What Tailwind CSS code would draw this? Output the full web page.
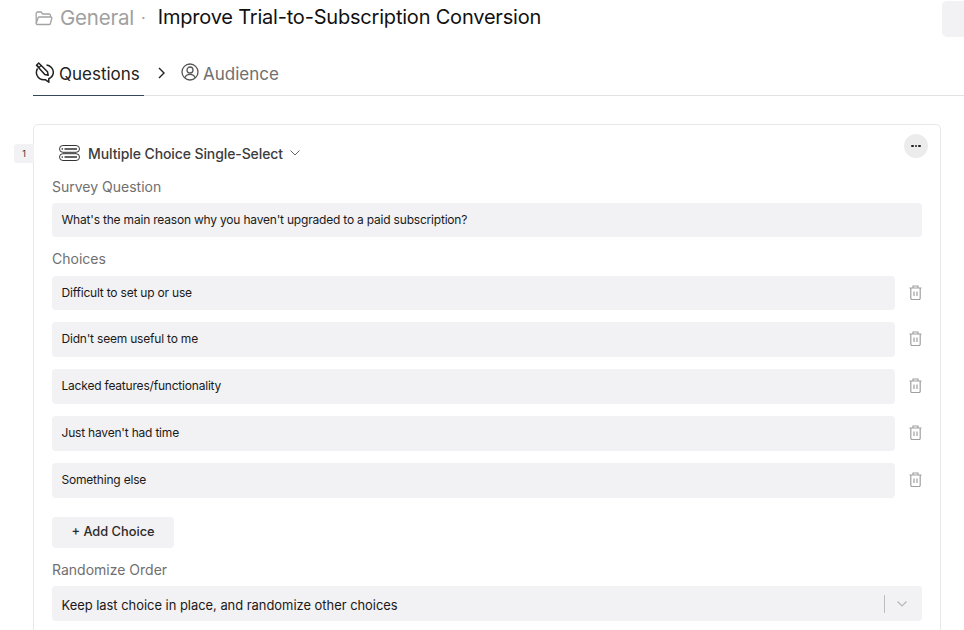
<!DOCTYPE html>
<html>
<head>
<meta charset="utf-8">
<script src="https://cdn.jsdelivr.net/npm/@tailwindcss/browser@4"></script>
</head>
<body class="bg-white overflow-hidden font-['Inter',sans-serif]">
<div class="h-[630px] w-[964px] overflow-hidden relative">
  <!-- title -->
  <div class="h-[36px] flex items-center pl-[35px] relative">
    <svg class="w-[18px] h-[15px] text-[#a3a3a3]" viewBox="0 0 18 15" fill="none" stroke="currentColor" stroke-width="1.300"><path d="M1.200 12.500V2.500A1.500 1.500 0 0 1 2.700 1h3.400l1.600 2h6.300a1.500 1.500 0 0 1 1.500 1.500V6"/><path d="M1.200 12.500 3 7a1.500 1.500 0 0 1 1.400-1h11.400a1 1 0 0 1 1 1.300l-1.400 5.200a1.300 1.300 0 0 1-1.300 1H2.300a1.100 1.100 0 0 1-1.100-1z"/></svg>
    <span class="ml-[7px] text-[20.500px] leading-none text-[#a0a0a0] tracking-[-0.2px]">General</span>
    <span class="ml-[7px] text-[#a0a0a0] text-[16px] leading-none">·</span>
    <span class="ml-[12px] text-[20px] leading-none text-[#111] tracking-[-0.2px] -translate-y-[1px]">Improve Trial-to-Subscription Conversion</span>
    <div class="absolute left-[942px] top-[1px] w-[30px] h-[36px] rounded-[5px] bg-[#f2f1f3]"></div>
  </div>
  <!-- tabs -->
  <div class="mt-[14px] ml-[33px] h-[46px] flex border-b border-[#e2e2e2]">
    <div class="w-[111px] h-[46px] border-b border-[#33475b] flex items-center pl-[2px]">
      <svg class="w-[19px] h-[21px] text-[#222]" viewBox="0 0 19 21" fill="none" stroke="currentColor" stroke-width="1.500"><path d="M2.600 6.500C1.300 8.500 1 11 2 13.300c1.300 2.900 4.300 4.700 7.500 4.500h1l3.300 2.300v-3.300c2.800-1.300 4.700-4 4.500-7-.1-1.700-.8-3.200-1.900-4.400-1.300-1.400-3-2.300-4.900-2.500"/><path d="M1.500 3.200 3.700 1l8.800 8.800.7 3.400-3.400-.7z" stroke-linejoin="round"/><path d="M1.800 3.200 4.200 5.500 6 3.500" stroke-width="1.200"/></svg>
      <span class="ml-[5px] text-[17px] text-[#222] translate-y-[2px]">Questions</span>
    </div>
    <div class="flex items-center">
      <svg class="ml-[13px] w-[9px] h-[12px] text-[#222]" viewBox="0 0 9 12" fill="none" stroke="currentColor" stroke-width="1.400"><path d="M2 1l5 5-5 5"/></svg>
      <svg class="ml-[15px] w-[18px] h-[18px] text-[#555] -translate-y-[1px]" viewBox="0 0 18 18" fill="none" stroke="currentColor" stroke-width="1.300"><circle cx="9" cy="9" r="8"/><circle cx="9" cy="7" r="3"/><path d="M3.800 15c.8-2.500 2.800-3.700 5.200-3.700s4.400 1.200 5.200 3.700"/></svg>
      <span class="ml-[4px] text-[17px] text-[#6f6f6f] translate-y-[2px]">Audience</span>
    </div>
  </div>
  <!-- card -->
  <div class="relative mt-[28px] ml-[33px] w-[908px] border border-[#e8e8e8] rounded-[5px] pl-[18px] pr-[18px] h-[520px]">
    <div class="absolute left-[-20px] top-[19px] w-[20px] h-[19px] bg-[#f2f1f3] rounded-l-[3px] flex items-center justify-center text-[9px] text-[#333]">1</div>
    <div class="absolute right-[12px] top-[9px] w-[24px] h-[24px] rounded-full bg-[#ececec] flex items-center justify-center gap-[1px]">
      <i class="block w-[2.500px] h-[2.500px] rounded-full bg-[#222]"></i><i class="block w-[2.500px] h-[2.500px] rounded-full bg-[#222]"></i><i class="block w-[2.500px] h-[2.500px] rounded-full bg-[#222]"></i>
    </div>
    <div class="h-[28px] mt-[14px] flex items-center pl-[7px]">
      <svg class="w-[21px] h-[16px] text-[#333]" viewBox="0 0 21 16" fill="none" stroke="currentColor" stroke-width="1"><rect x=".5" y=".5" width="20" height="6.800" rx="3.400"/><rect x=".5" y="8.700" width="20" height="6.800" rx="3.400"/><path d="M5.500 3.900h12.500M5.500 12.100h12.500" stroke-width="1.500"/><circle cx="3.300" cy="3.900" r=".8" fill="currentColor" stroke="none"/><circle cx="3.300" cy="12.100" r=".8" fill="currentColor" stroke="none"/></svg>
      <span class="ml-[8px] text-[14px] font-medium text-[#3c3c3c] tracking-[-0.1px]">Multiple Choice Single-Select</span>
      <svg class="ml-[7px] w-[10px] h-[6px] text-[#666]" viewBox="0 0 10 6" fill="none" stroke="currentColor" stroke-width="1"><path d="M.5.5 5 5 9.500.5"/></svg>
    </div>
    <div class="mt-[11px] h-[18px] text-[14px] leading-[18px] text-[#6f6f6f]">Survey Question</div>
    <div class="mt-[7px] h-[34px] w-[870px] bg-[#f2f1f3] rounded-[4px] flex items-center pl-[9.500px] text-[12px] tracking-[-0.2px] text-[#1a1a1a]">What's the main reason why you haven't upgraded to a paid subscription?</div>
    <div class="mt-[13px] h-[18px] text-[14px] leading-[18px] text-[#6f6f6f]">Choices</div>
    <div class="mt-[8px] flex flex-col gap-[12px]">
      <div class="flex items-center">
        <div class="h-[34px] w-[843px] bg-[#f2f1f3] rounded-[4px] flex items-center pl-[9.500px] pb-[1px] text-[12px] tracking-[-0.2px] text-[#1a1a1a]">Difficult to set up or use</div>
        <svg class="ml-[14px] w-[13px] h-[15px] text-[#a0a0a0] -translate-y-[1px]" viewBox="0 0 13 15" fill="none" stroke="currentColor" stroke-width="1.200"><path d="M.5 3h12M4 3V1h5v2M1.800 3v10.300a1.200 1.200 0 0 0 1.200 1.200h7a1.200 1.200 0 0 0 1.200-1.200V3M5 6.500v4.500M8 6.500v4.500"/></svg>
      </div>
      <div class="flex items-center">
        <div class="h-[35px] w-[843px] bg-[#f2f1f3] rounded-[4px] flex items-center pl-[9.500px] pb-[1px] text-[12px] tracking-[-0.2px] text-[#1a1a1a]">Didn't seem useful to me</div>
        <svg class="ml-[14px] w-[13px] h-[15px] text-[#a0a0a0] -translate-y-[1px]" viewBox="0 0 13 15" fill="none" stroke="currentColor" stroke-width="1.200"><path d="M.5 3h12M4 3V1h5v2M1.800 3v10.300a1.200 1.200 0 0 0 1.200 1.200h7a1.200 1.200 0 0 0 1.200-1.200V3M5 6.500v4.500M8 6.500v4.500"/></svg>
      </div>
      <div class="flex items-center">
        <div class="h-[35px] w-[843px] bg-[#f2f1f3] rounded-[4px] flex items-center pl-[9.500px] pb-[1px] text-[12px] tracking-[-0.2px] text-[#1a1a1a]">Lacked features/functionality</div>
        <svg class="ml-[14px] w-[13px] h-[15px] text-[#a0a0a0] -translate-y-[1px]" viewBox="0 0 13 15" fill="none" stroke="currentColor" stroke-width="1.200"><path d="M.5 3h12M4 3V1h5v2M1.800 3v10.300a1.200 1.200 0 0 0 1.200 1.200h7a1.200 1.200 0 0 0 1.200-1.200V3M5 6.500v4.500M8 6.500v4.500"/></svg>
      </div>
      <div class="flex items-center">
        <div class="h-[35px] w-[843px] bg-[#f2f1f3] rounded-[4px] flex items-center pl-[9.500px] pb-[1px] text-[12px] tracking-[-0.2px] text-[#1a1a1a]">Just haven't had time</div>
        <svg class="ml-[14px] w-[13px] h-[15px] text-[#a0a0a0] -translate-y-[1px]" viewBox="0 0 13 15" fill="none" stroke="currentColor" stroke-width="1.200"><path d="M.5 3h12M4 3V1h5v2M1.800 3v10.300a1.200 1.200 0 0 0 1.200 1.200h7a1.200 1.200 0 0 0 1.200-1.200V3M5 6.500v4.500M8 6.500v4.500"/></svg>
      </div>
      <div class="flex items-center">
        <div class="h-[35px] w-[843px] bg-[#f2f1f3] rounded-[4px] flex items-center pl-[9.500px] pb-[1px] text-[12px] tracking-[-0.2px] text-[#1a1a1a]">Something else</div>
        <svg class="ml-[14px] w-[13px] h-[15px] text-[#a0a0a0] -translate-y-[1px]" viewBox="0 0 13 15" fill="none" stroke="currentColor" stroke-width="1.200"><path d="M.5 3h12M4 3V1h5v2M1.800 3v10.300a1.200 1.200 0 0 0 1.200 1.200h7a1.200 1.200 0 0 0 1.200-1.200V3M5 6.500v4.500M8 6.500v4.500"/></svg>
      </div>
    </div>
    <div class="mt-[19px] h-[31px] w-[122px] bg-[#f2f1f3] rounded-[4px] flex items-center justify-center pb-[2px] text-[12.800px] font-medium text-[#2a2a2a]">+ Add Choice</div>
    <div class="mt-[13px] h-[18px] text-[14px] leading-[18px] text-[#6f6f6f]">Randomize Order</div>
    <div class="mt-[7px] h-[35px] w-[870px] bg-[#f2f1f3] rounded-[4px] flex items-center pl-[9.500px] pr-[15px] text-[12.900px] text-[#1a1a1a]">
      <span class="flex-1 translate-y-[2px]">Keep last choice in place, and randomize other choices</span>
      <i class="block w-px h-[18px] bg-[#bdbdbd]"></i>
      <svg class="ml-[12px] w-[10px] h-[6px] text-[#b5b5b5]" viewBox="0 0 10 6" fill="none" stroke="currentColor" stroke-width="1.100"><path d="M.5.5 5 5 9.500.5"/></svg>
    </div>
  </div>
</div>
</body>
</html>
